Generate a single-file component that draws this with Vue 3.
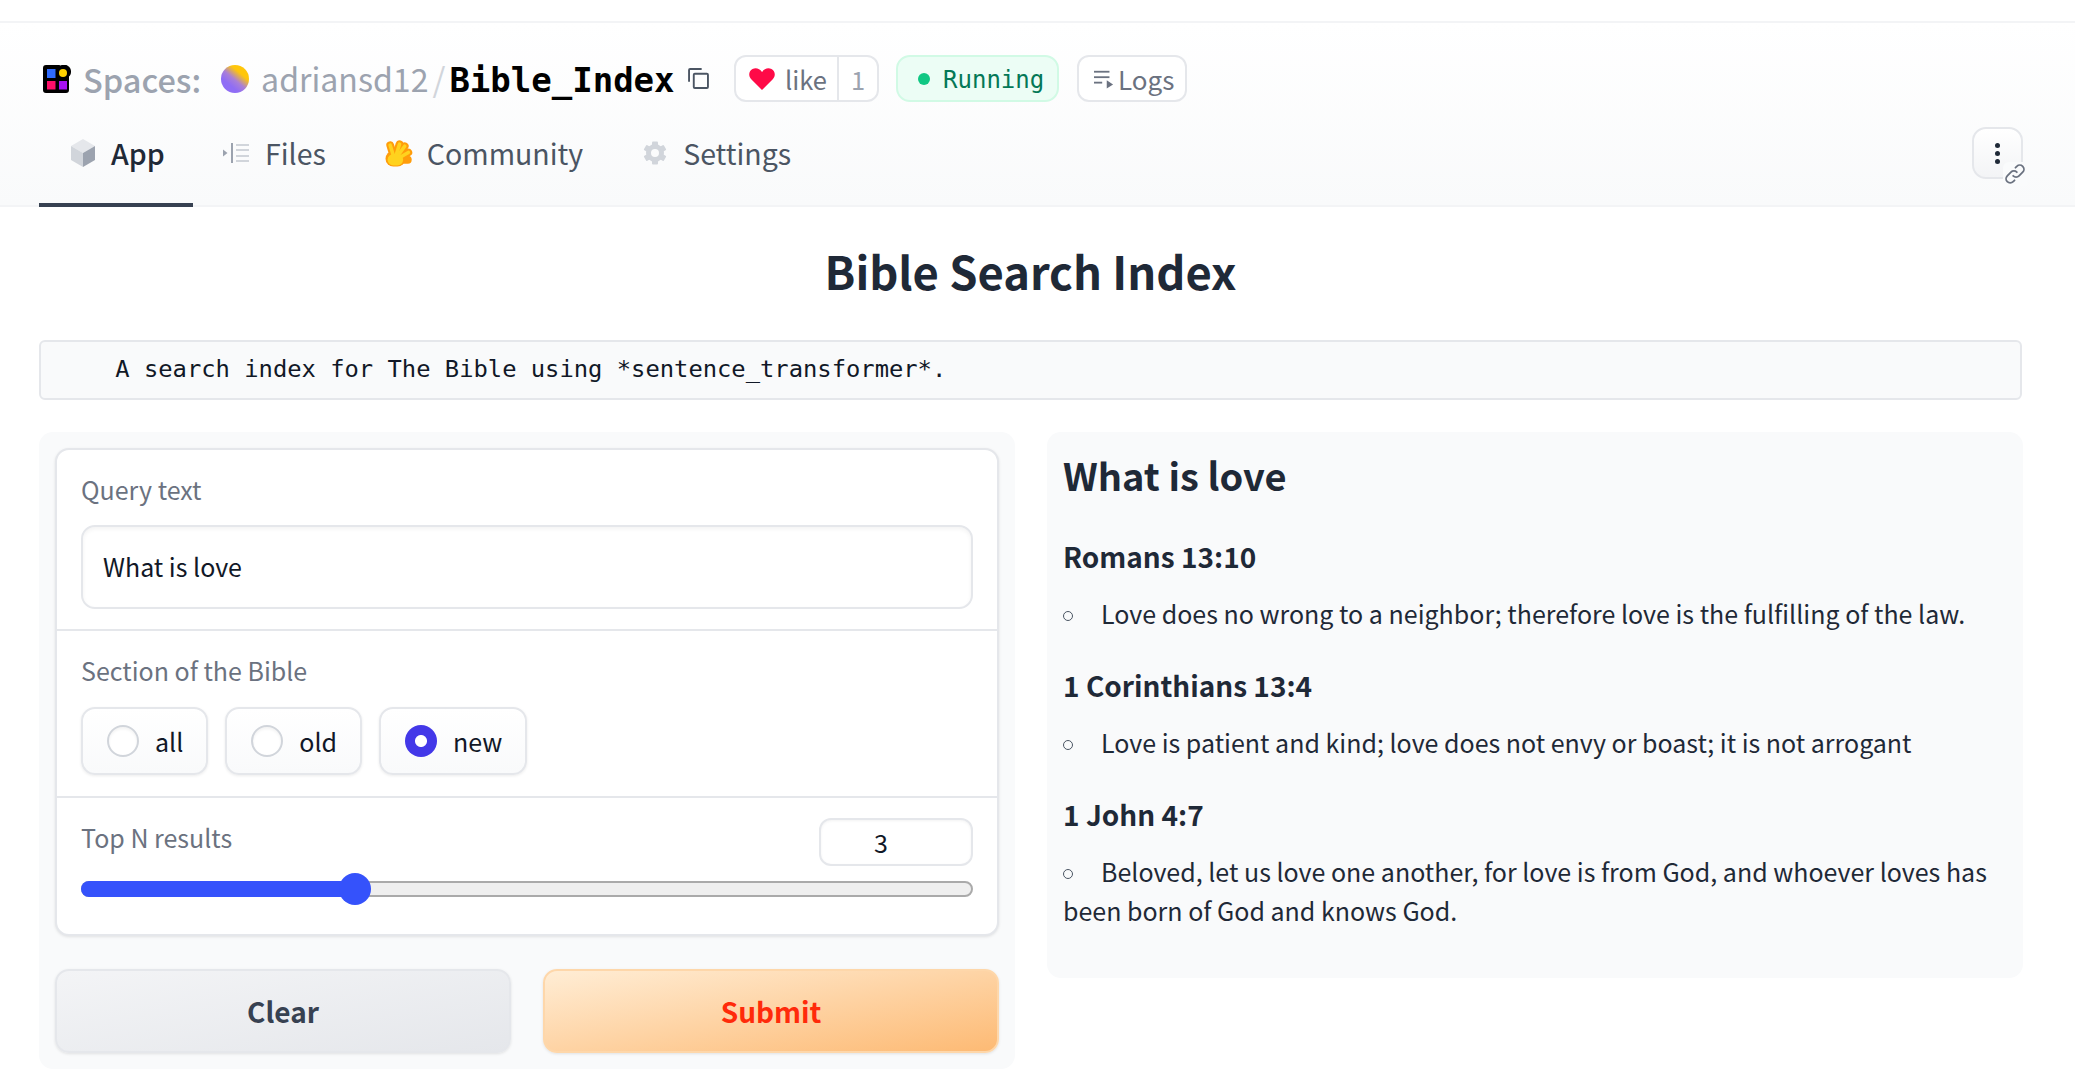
<script setup>
import { computed, ref } from 'vue'

const topN = ref(3)
const sliderMax = 10
const sliderRatio = computed(() => topN.value / sliderMax)
// same thumb travel as a native range input
const thumbLeft = computed(() => `calc(14px + (100% - 28px) * ${sliderRatio.value})`)

const gearTeeth = [0, 60, 120, 180, 240, 300]

const sections = [
  { label: 'all', checked: false },
  { label: 'old', checked: false },
  { label: 'new', checked: true }
]

const verses = [
  { ref: 'Romans 13:10', text: 'Love does no wrong to a neighbor; therefore love is the fulfilling of the law.' },
  { ref: '1 Corinthians 13:4', text: 'Love is patient and kind; love does not envy or boast; it is not arrogant' },
  { ref: '1 John 4:7', text: 'Beloved, let us love one another, for love is from God, and whoever loves has been born of God and knows God.' }
]
</script>

<template>
  <div class="page">
    <header class="space-header">
      <div class="title-row">
        <svg class="logo" viewBox="0 0 28 28">
          <path d="M3 0h13a2 2 0 0 1 1.500.600A7 7 0 0 1 28 7c0 2-1 3.500-2 4.500V25a3 3 0 0 1-3 3H3a3 3 0 0 1-3-3V3a3 3 0 0 1 3-3z" fill="#000" />
          <rect x="4" y="4" width="8.500" height="9" fill="#2f6bff" />
          <circle cx="20" cy="8" r="4" fill="#ffd200" />
          <rect x="4" y="16" width="8.500" height="8.500" fill="#ff0f6a" />
          <rect x="16" y="16" width="8" height="8.500" fill="#a811f2" />
        </svg>
        <span class="spaces">Spaces:</span>
        <span class="avatar"></span>
        <span class="owner">adriansd12</span>
        <span class="slash">/</span>
        <span class="repo">Bible_Index</span>
        <svg class="copy" viewBox="0 0 20 20" fill="none" stroke="#4b5563" stroke-width="1.800">
          <rect x="5.500" y="5.500" width="13.500" height="13.500" rx="1" />
          <path d="M1 13V2a1 1 0 0 1 1-1h11" />
        </svg>
        <div class="like">
          <span class="like-main">
            <svg class="heart" viewBox="0 0 26 22"><path d="M13 22 2 11C-1 7.500 0 2.500 3.500 1 7 -.5 10.500.5 13 4c2.500-3.500 6-4.500 9.500-3C26 2.500 27 7.500 24 11z" fill="#ff0a47" /></svg>
            like
          </span>
          <span class="like-count">1</span>
        </div>
        <div class="running"><span class="dot"></span><span class="running-text">Running</span></div>
        <div class="logs">
          <svg class="logs-icon" viewBox="0 0 22 20" fill="#6b7280">
            <rect x="0" y="1" width="17" height="2" />
            <rect x="0" y="7" width="17" height="2" />
            <rect x="0" y="13" width="9" height="2" />
            <path d="M14 11.500 21 16l-7 4.500z" />
          </svg>
          Logs
        </div>
      </div>

      <nav class="tabs">
        <a class="tab active">
          <svg class="tab-icon" viewBox="0 0 24 28">
            <path d="M12 0 24 7 12 14 0 7z" fill="#e5e7eb" />
            <path d="M0 7 12 14V28L0 21z" fill="#d1d5db" />
            <path d="M24 7 12 14V28L24 21z" fill="#9ca3af" />
          </svg>
          App
        </a>
        <a class="tab">
          <svg class="tab-icon files-icon" viewBox="0 0 26 20" fill="#9ca3af">
            <path d="M0 6.500 4.500 10 0 13.500z" />
            <rect x="8" y="0" width="2" height="20" />
            <rect x="13" y="1" width="13" height="2" fill="#d1d5db" />
            <rect x="13" y="6" width="13" height="2" fill="#d1d5db" />
            <rect x="13" y="12" width="13" height="2" fill="#d1d5db" />
            <rect x="13" y="17" width="13" height="2" fill="#d1d5db" />
          </svg>
          Files
        </a>
        <a class="tab community">
          <svg class="tab-icon hand-icon" viewBox="3 0 27 27" fill="none" stroke-linecap="round">
            <g stroke="#ff9d0b" stroke-width="7.500">
              <path d="M12 19 8 6" />
              <path d="M13 18 17 5" />
              <path d="M14 18 22 7" />
              <path d="M15 19 25.500 13" />
              <path d="M15 20 25 20" />
              <path d="M11 19h4" stroke-width="15" />
            </g>
            <g stroke="#ffd21e" stroke-width="3.500">
              <path d="M12 19 8 6" />
              <path d="M13 18 17 5" />
              <path d="M14 18 22 7" />
              <path d="M15 19 25.500 13" />
              <path d="M11 20h4" stroke-width="11" />
            </g>
          </svg>
          Community
        </a>
        <a class="tab settings">
          <svg class="tab-icon gear-icon" viewBox="0 0 24 24">
            <circle cx="12" cy="12" r="6.500" fill="none" stroke="#d1d5db" stroke-width="5" />
            <rect v-for="deg in gearTeeth" :key="deg" x="9" y="0.500" width="6" height="5" rx="1" fill="#d1d5db" :transform="`rotate(${deg} 12 12)`" />
          </svg>
          Settings
        </a>
        <div class="kebab-wrap">
          <button class="kebab"><i></i><i></i><i></i></button>
          <svg class="link-icon" viewBox="0 0 24 24" fill="none" stroke="#6b7280" stroke-width="2" stroke-linecap="round">
            <path d="M10 14a4.500 4.500 0 0 0 6.400 0l4-4a4.500 4.500 0 0 0-6.400-6.400l-1.500 1.500" />
            <path d="M14 10a4.500 4.500 0 0 0-6.400 0l-4 4a4.500 4.500 0 0 0 6.400 6.400l1.500-1.500" />
          </svg>
        </div>
      </nav>
    </header>

    <main class="content">
      <h1 class="page-title">Bible Search Index</h1>
      <pre class="description">    A search index for The Bible using *sentence_transformer*.</pre>

      <div class="columns">
        <section class="panel form-panel">
          <div class="form">
            <div class="block query-block">
              <div class="label">Query text</div>
              <div class="text-input">What is love</div>
            </div>
            <div class="block section-block">
              <div class="label">Section of the Bible</div>
              <div class="radios">
                <label v-for="s in sections" :key="s.label" class="radio">
                  <span class="radio-mark" :class="{ checked: s.checked }"></span>
                  {{ s.label }}
                </label>
              </div>
            </div>
            <div class="block slider-block">
              <div class="slider-head">
                <div class="label">Top N results</div>
                <div class="number-input">{{ topN }}</div>
              </div>
              <div class="track">
                <div class="track-fill" :style="{ width: thumbLeft }"></div>
                <div class="thumb" :style="{ left: thumbLeft }"></div>
              </div>
            </div>
          </div>
          <div class="buttons">
            <button class="btn btn-clear">Clear</button>
            <button class="btn btn-submit">Submit</button>
          </div>
        </section>

        <section class="panel result">
          <h2 class="result-title">What is love</h2>
          <template v-for="v in verses" :key="v.ref">
            <h3 class="verse-ref">{{ v.ref }}</h3>
            <p class="verse"><span class="bullet"></span>{{ v.text }}</p>
          </template>
        </section>
      </div>
    </main>
  </div>
</template>

<style>
html,
body {
  margin: 0;
  background: #fff;
}
</style>

<style scoped>
.page {
  width: 2075px;
  height: 1073px;
  overflow: hidden;
  font-family: "Noto Sans CJK SC", "Noto Sans", sans-serif;
  color: #1f2937;
  background: #fff;
}

.space-header {
  margin-top: 21px;
  height: 186px;
  box-sizing: border-box;
  border-top: 2px solid #f3f4f6;
  border-bottom: 2px solid #f3f4f6;
  background: linear-gradient(to bottom, #fff, #f9fafb);
  padding: 32px 52px 0 39px;
}

.title-row {
  display: flex;
  align-items: center;
  height: 47px;
  padding-left: 4px;
}

.logo {
  width: 28px;
  height: 28px;
}

.spaces {
  margin-left: 12px;
  font-size: 32.500px;
  line-height: 47px;
  font-weight: 500;
  color: #9ca3af;
}

.avatar {
  margin-left: 20px;
  width: 28px;
  height: 28px;
  border-radius: 50%;
  background: linear-gradient(40deg, #8f6df5 30%, #a97fd8 48%, #ffc60a 70%);
}

.owner {
  margin-left: 12px;
  font-size: 32.100px;
  line-height: 47px;
  color: #9ca3af;
}

.slash {
  margin: 0 4px;
  font-size: 33px;
  line-height: 47px;
  color: #d1d5db;
}

.repo {
  padding-top: 3px;
  font-family: "DejaVu Sans Mono", monospace;
  font-size: 34px;
  line-height: 47px;
  font-weight: 700;
  color: #000;
}

.copy {
  margin-left: 13.500px;
  width: 21px;
  height: 21px;
}

.like {
  margin-left: 25px;
  display: flex;
  width: 145px;
  height: 47px;
  box-sizing: border-box;
  border: 2px solid #e5e7eb;
  border-radius: 12px;
  background: #fff;
  font-size: 25.500px;
  line-height: 43px;
  color: #6b7280;
}

.like-main {
  width: 103px;
  box-sizing: border-box;
  display: flex;
  align-items: center;
  gap: 10px;
  padding-left: 13px;
  border-right: 2px solid #e5e7eb;
}

.heart {
  width: 26px;
  height: 22px;
}

.like-count {
  flex: 1;
  text-align: center;
  color: #9ca3af;
}

.running {
  margin-left: 17px;
  width: 163px;
  height: 47px;
  box-sizing: border-box;
  display: flex;
  align-items: center;
  padding-left: 20px;
  border: 2px solid #d1fae5;
  border-radius: 14px;
  background: #ecfdf5;
  font-family: "DejaVu Sans Mono", monospace;
  font-size: 24px;
  color: #047857;
}

.running-text {
  padding-top: 2px;
}

.dot {
  width: 12px;
  height: 12px;
  margin-right: 13px;
  border-radius: 50%;
  background: #10c783;
}

.logs {
  margin-left: 18px;
  width: 110px;
  height: 47px;
  box-sizing: border-box;
  display: flex;
  align-items: center;
  gap: 4px;
  padding-left: 15px;
  border: 2px solid #e5e7eb;
  border-radius: 12px;
  background: #fff;
  font-size: 26px;
  color: #6b7280;
}

.logs-icon {
  width: 20px;
  height: 20px;
}

.tabs {
  margin-top: 28px;
  display: flex;
  align-items: stretch;
  height: 77px;
}

.tab {
  display: flex;
  align-items: center;
  box-sizing: border-box;
  padding: 0 28px 32px 30px;
  gap: 16px;
  font-size: 28.500px;
  line-height: 40px;
  color: #4b5563;
}

.tab.active {
  width: 154px;
  padding-left: 32px;
  font-weight: 500;
  color: #1f2937;
  border-bottom: 4px solid #374151;
  padding-bottom: 28px;
}

.tab.community {
  gap: 13px;
}

.tab.settings {
  padding-left: 32px;
}

.tab-icon {
  width: 24px;
  height: 28px;
}

.files-icon {
  width: 26px;
  height: 20px;
}

.hand-icon {
  width: 30px;
  height: 28px;
}

.gear-icon {
  width: 24px;
  height: 24px;
}

.kebab-wrap {
  position: relative;
  margin-left: auto;
  margin-top: -3px;
  width: 51px;
  height: 52px;
}

.kebab {
  width: 51px;
  height: 52px;
  padding: 0;
  display: flex;
  flex-direction: column;
  align-items: center;
  justify-content: center;
  gap: 3px;
  border: 2px solid #e5e7eb;
  border-radius: 14px;
  background: linear-gradient(to bottom, #fff, #f3f4f6);
}

.kebab i {
  width: 5px;
  height: 5px;
  border-radius: 50%;
  background: #1f2937;
}

.link-icon {
  position: absolute;
  right: -4px;
  bottom: -7px;
  width: 24px;
  height: 24px;
  padding: 1px;
  box-sizing: border-box;
  background: #fafbfc;
  border-radius: 6px 0 0 0;
}

.content {
  padding: 0 53px 0 39px;
}

.page-title {
  margin: 36px 0 0;
  text-align: center;
  font-size: 45.300px;
  line-height: 54px;
  font-weight: 600;
  color: #1f2937;
}

.description {
  margin: 43px 0 0;
  height: 60px;
  box-sizing: border-box;
  padding-left: 17px;
  border: 2px solid #e5e7eb;
  border-radius: 6px;
  background: #f9fafb;
  font-family: "DejaVu Sans Mono", monospace;
  font-size: 23.800px;
  line-height: 54px;
  color: #111827;
}

.columns {
  margin-top: 32px;
  display: grid;
  grid-template-columns: 976px 976px;
  gap: 32px;
  align-items: start;
}

.panel {
  border-radius: 14px;
  background: #f9fafb;
}

.form-panel {
  box-sizing: border-box;
  height: 637px;
  padding: 16px 16px 0;
}

.form {
  height: 488px;
  box-sizing: border-box;
  border: 2px solid #e5e7eb;
  border-radius: 14px;
  background: #fff;
  box-shadow: 0 1px 3px rgba(0, 0, 0, 0.1);
}

.block {
  box-sizing: border-box;
  padding: 0 24px;
  border-bottom: 2px solid #e5e7eb;
}

.block:last-child {
  border-bottom: 0;
}

.query-block {
  height: 181px;
  padding-top: 21px;
}

.section-block {
  height: 167px;
  padding-top: 21px;
}

.slider-block {
  padding-top: 20px;
}

.label {
  font-size: 25px;
  line-height: 36px;
  color: #6b7280;
}

.text-input {
  margin-top: 18px;
  height: 84px;
  box-sizing: border-box;
  padding-left: 20px;
  border: 2px solid #e5e7eb;
  border-radius: 14px;
  background: #fff;
  box-shadow: inset 0 2px 4px rgba(0, 0, 0, 0.05);
  font-size: 25px;
  line-height: 78px;
  color: #111827;
}

.radios {
  margin-top: 19px;
  display: flex;
  gap: 17px;
}

.radio {
  display: flex;
  align-items: center;
  gap: 16px;
  height: 68px;
  box-sizing: border-box;
  padding: 0 23px 0 24px;
  border: 2px solid #e5e7eb;
  border-radius: 14px;
  background: linear-gradient(to bottom, #fff, #f9fafb);
  box-shadow: 0 1px 3px rgba(0, 0, 0, 0.08);
  font-size: 25px;
  color: #111827;
}

.radio-mark {
  width: 32px;
  height: 32px;
  box-sizing: border-box;
  border: 2px solid #d1d5db;
  border-radius: 50%;
  background: #fff;
  box-shadow: inset 0 2px 3px rgba(0, 0, 0, 0.05);
}

.radio-mark.checked {
  border: 0;
  box-shadow: none;
  background: radial-gradient(circle, #fff 0 5.500px, #4338e8 6.500px);
}

.slider-head {
  display: flex;
  justify-content: space-between;
  align-items: flex-start;
}

.slider-head .label {
  margin-top: 1px;
}

.number-input {
  width: 154px;
  height: 48px;
  box-sizing: border-box;
  padding-left: 53px;
  border: 2px solid #e5e7eb;
  border-radius: 12px;
  background: #fff;
  box-shadow: inset 0 1px 3px rgba(0, 0, 0, 0.05);
  font-size: 25px;
  line-height: 44px;
  color: #111827;
}

.track {
  position: relative;
  margin-top: 15px;
  height: 16px;
  box-sizing: border-box;
  border: 2px solid #aaa;
  border-radius: 8px;
  background: #efefef;
}

.track-fill {
  position: absolute;
  left: -2px;
  top: -2px;
  bottom: -2px;
  border-radius: 8px 0 0 8px;
  background: #3552fb;
}

.thumb {
  position: absolute;
  top: -10px;
  width: 32px;
  height: 32px;
  margin-left: -16px;
  border-radius: 50%;
  background: #3552fb;
}

.buttons {
  margin-top: 33px;
  display: grid;
  grid-template-columns: 1fr 1fr;
  gap: 32px;
}

.btn {
  height: 84px;
  border-radius: 14px;
  font-family: inherit;
  font-size: 28px;
  font-weight: 600;
  box-shadow: 0 1px 3px rgba(0, 0, 0, 0.1);
}

.btn-clear {
  border: 2px solid #e5e7eb;
  background: linear-gradient(to bottom right, #f3f4f6, #e5e7eb);
  color: #374151;
}

.btn-submit {
  border: 2px solid #fed7aa;
  background: linear-gradient(to bottom right, #ffedd5, #fdba74);
  color: #ff2a0a;
}

.result {
  box-sizing: border-box;
  height: 546px;
  padding: 16px;
}

.result-title {
  margin: 0;
  font-size: 38px;
  line-height: 54px;
  font-weight: 600;
  color: #1f2937;
}

.result-title + .verse-ref {
  margin-top: 34px;
}

.verse-ref {
  margin: 32px 0 0;
  font-size: 28px;
  line-height: 40px;
  font-weight: 600;
  color: #1f2937;
}

.verse {
  margin: 18px 0 0;
  font-size: 25px;
  line-height: 39px;
  color: #1f2937;
}

.bullet {
  display: inline-block;
  width: 10px;
  height: 10px;
  box-sizing: border-box;
  margin: 0 28px 3px 0;
  border: 1.500px solid #4b5563;
  border-radius: 50%;
}
</style>
